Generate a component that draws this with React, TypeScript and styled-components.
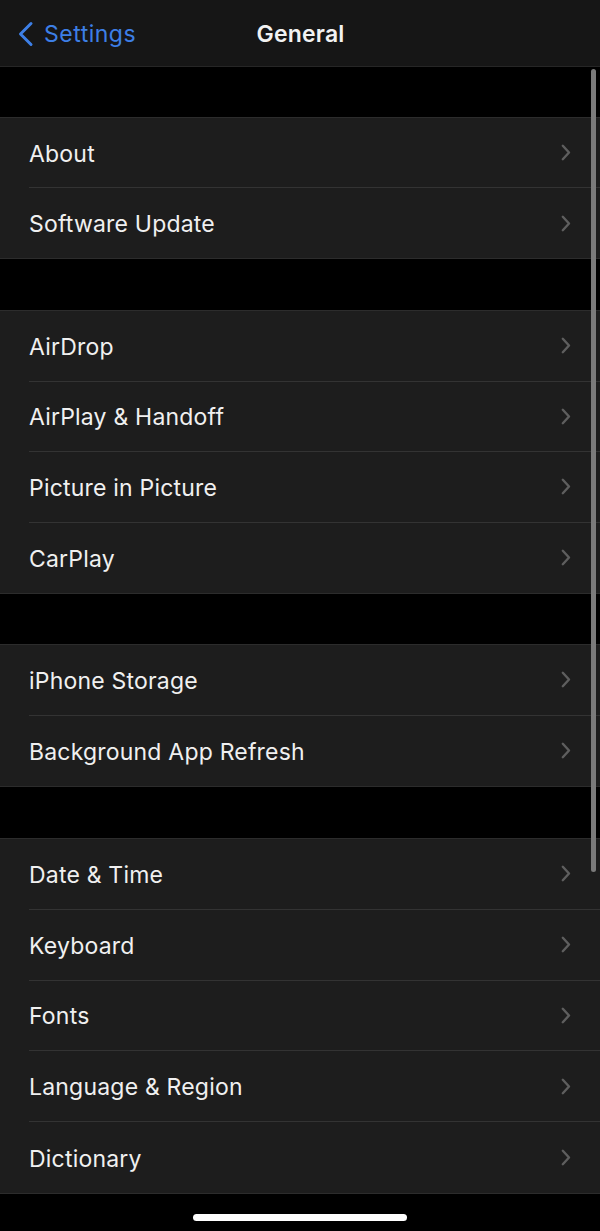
import React from "react";
import styled, { createGlobalStyle } from "styled-components";

const Global = createGlobalStyle`
  html, body {
    margin: 0;
    padding: 0;
    background: #000;
  }
  body {
    font-family: Inter, "Noto Sans", "Liberation Sans", sans-serif;
    -webkit-font-smoothing: antialiased;
  }
`;

const Screen = styled.div`
  position: relative;
  width: 600px;
  height: 1231px;
  background: #000;
  overflow: hidden;
  display: flex;
  flex-direction: column;
`;

const NavBar = styled.header`
  height: 67px;
  flex: none;
  box-sizing: border-box;
  background: #161616;
  border-bottom: 1px solid #262626;
  display: grid;
  grid-template-columns: 1fr auto 1fr;
  align-items: center;
  padding: 2px 0 0 17px;
`;

const BackButton = styled.div`
  display: flex;
  align-items: center;
  gap: 9px;
  color: #3d7fe6;
  font-size: 23px;
  letter-spacing: 0.5px;
`;

const Title = styled.h1`
  margin: 0;
  color: #f2f2f2;
  font-size: 23px;
  font-weight: 600;
  letter-spacing: 0.2px;
  transform: translateX(-8px);
`;

const Content = styled.div`
  display: flex;
  flex-direction: column;
`;

const Group = styled.section<{ $gap: number }>`
  margin-top: ${(p) => p.$gap}px;
  background: #1d1d1d;
  border-top: 1px solid #2c2c2c;
  border-bottom: 1px solid #2c2c2c;
`;

const Row = styled.div<{ $h: number }>`
  height: ${(p) => p.$h}px;
  padding-left: 30px;
  display: flex;
  align-items: stretch;
`;

const RowInner = styled.div<{ $last: boolean }>`
  flex: 1;
  display: flex;
  align-items: center;
  justify-content: space-between;
  padding-right: 29px;
  margin-left: -1px;
  border-bottom: ${(p) => (p.$last ? "none" : "1px solid #333")};
`;

const Label = styled.span`
  color: #f0f0f0;
  font-size: 23px;
  letter-spacing: 0.2px;
  padding-top: 2px;
`;

const ScrollThumb = styled.div`
  position: absolute;
  right: 4px;
  top: 69px;
  width: 5px;
  height: 803px;
  border-radius: 3px;
  background: #7b7b7b;
`;

const HomeIndicator = styled.div`
  position: absolute;
  left: 193px;
  bottom: 10px;
  width: 214px;
  height: 7px;
  border-radius: 4px;
  background: #fff;
`;

const BackChevron = () => (
  <svg width="18" height="26" viewBox="0 0 18 26" fill="none">
    <path
      d="M14 2.5 L3.5 13 L14 23.5"
      stroke="#3d7fe6"
      strokeWidth="3"
      strokeLinecap="round"
      strokeLinejoin="round"
    />
  </svg>
);

const Chevron = () => (
  <svg width="10" height="17" viewBox="0 0 10 17" fill="none">
    <path
      d="M1.8 1.8 L8 8.5 L1.8 15.2"
      stroke="#5e5e5e"
      strokeWidth="2.4"
      strokeLinecap="round"
      strokeLinejoin="round"
    />
  </svg>
);

type Section = { gap: number; rowH: number; items: string[] };

const sections: Section[] = [
  { gap: 50, rowH: 70, items: ["About", "Software Update"] },
  {
    gap: 51,
    rowH: 70.5,
    items: ["AirDrop", "AirPlay & Handoff", "Picture in Picture", "CarPlay"],
  },
  { gap: 50, rowH: 70.5, items: ["iPhone Storage", "Background App Refresh"] },
  {
    gap: 51,
    rowH: 70.8,
    items: ["Date & Time", "Keyboard", "Fonts", "Language & Region", "Dictionary"],
  },
];

export default function App() {
  return (
    <>
      <Global />
      <Screen>
        <NavBar>
          <BackButton>
            <BackChevron />
            <span>Settings</span>
          </BackButton>
          <Title>General</Title>
          <span />
        </NavBar>
        <Content>
          {sections.map((s, si) => (
            <Group key={si} $gap={s.gap}>
              {s.items.map((item, i) => (
                <Row key={item} $h={s.rowH}>
                  <RowInner $last={i === s.items.length - 1}>
                    <Label>{item}</Label>
                    <Chevron />
                  </RowInner>
                </Row>
              ))}
            </Group>
          ))}
        </Content>
        <ScrollThumb />
        <HomeIndicator />
      </Screen>
    </>
  );
}
